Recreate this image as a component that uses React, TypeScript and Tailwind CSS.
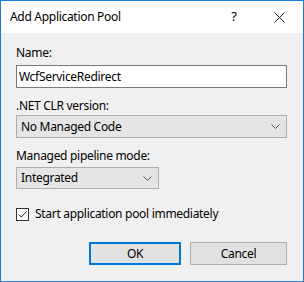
const Chevron = () => (
  <svg width="9" height="5" viewBox="0 0 9 5" className="shrink-0">
    <path d="M0.5 0.5 L4.5 4.5 L8.5 0.5" fill="none" stroke="#555" strokeWidth="1" />
  </svg>
)

const Field = ({ label, children }: { label: string; children: React.ReactNode }) => (
  <div className="flex flex-col">
    <span className="h-[16px] leading-[16px]">{label}</span>
    {children}
  </div>
)

export default function App() {
  return (
    <div
      className="w-[304px] h-[282px] border border-[#1a7fd4] bg-[#f0f0f0] flex flex-col text-[12px] tracking-[-0.3px] text-black"
      style={{ fontFamily: '"Noto Sans", "Liberation Sans", sans-serif' }}
    >
      {/* title bar */}
      <div className="h-[32px] bg-white flex items-center pl-[9px]">
        <span className="flex-1">Add Application Pool</span>
        <span className="w-[14px] text-[13px] mr-[33px] text-center">?</span>
        <svg width="11" height="11" viewBox="0 0 11 11" className="mr-[18px]">
          <path d="M0.5 0.5 L10.5 10.5 M10.5 0.5 L0.5 10.5" stroke="#222" strokeWidth="1" />
        </svg>
      </div>

      <div className="flex flex-col px-[15px] pt-[12px]">
        <Field label="Name:">
          <div className="mt-[4px] h-[23px] w-[271px] border border-[#7a7a7a] bg-white flex items-center pl-[2px]">
            WcfServiceRedirect
          </div>
        </Field>

        <div className="mt-[10px]">
          <Field label=".NET CLR version:">
            <div className="mt-[1px] h-[23px] w-[271px] border border-[#adadad] bg-[#e5e5e5] flex items-center pl-[4px] pr-[6px]">
              <span className="flex-1">No Managed Code</span>
              <Chevron />
            </div>
          </Field>
        </div>

        <div className="mt-[10px]">
          <Field label="Managed pipeline mode:">
            <div className="mt-[3px] h-[22px] w-[143px] border border-[#adadad] bg-[#e5e5e5] flex items-center pl-[4px] pr-[6px]">
              <span className="flex-1">Integrated</span>
              <Chevron />
            </div>
          </Field>
        </div>

        <label className="mt-[16px] flex items-center gap-[6px]">
          <span className="w-[13px] h-[13px] border border-[#333] bg-white flex items-center justify-center">
            <svg width="9" height="7" viewBox="0 0 9 7">
              <path d="M0.5 3.5 L3.3 6 L8.5 0.5" fill="none" stroke="#222" strokeWidth="1" />
            </svg>
          </span>
          <span>Start application pool immediately</span>
        </label>

        <div className="mt-[19px] flex justify-end gap-[9px] pr-[1px]">
          <button className="w-[92px] h-[23px] border-2 border-[#0078d7] bg-[#e1e1e1]">OK</button>
          <button className="w-[97px] h-[23px] border border-[#adadad] bg-[#e1e1e1]">Cancel</button>
        </div>
      </div>
    </div>
  )
}
